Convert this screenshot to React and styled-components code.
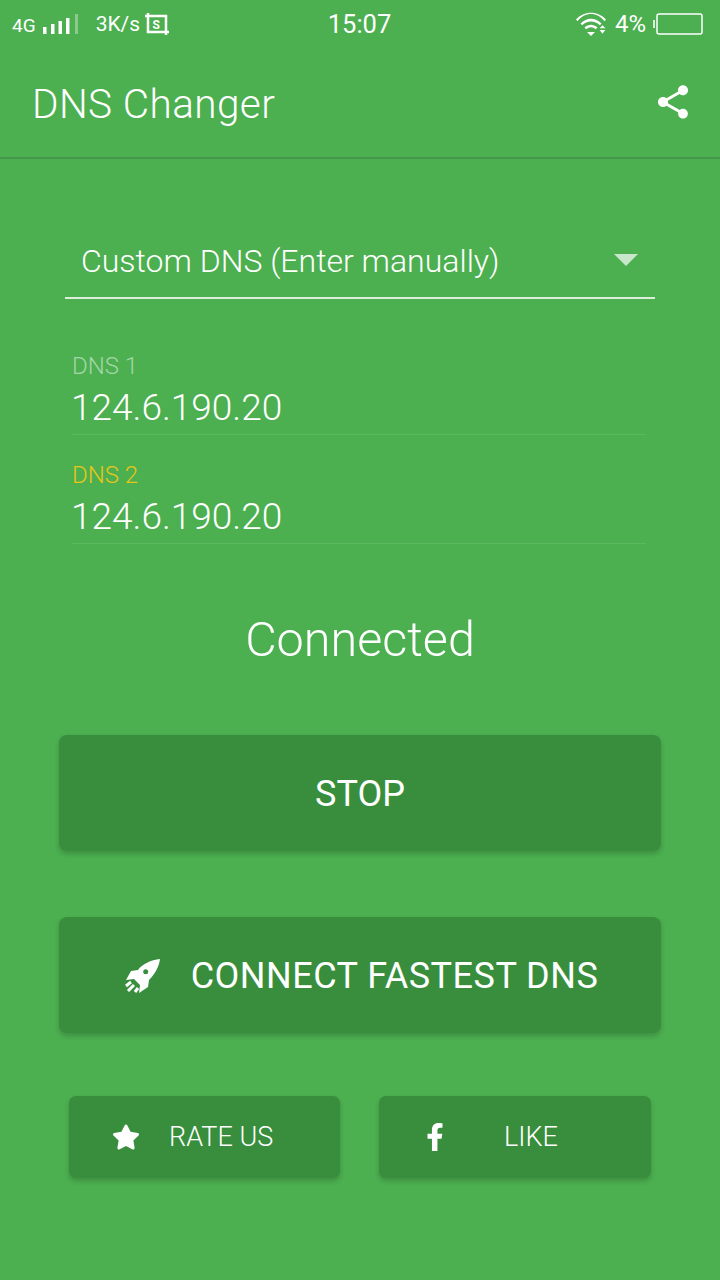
import React from "react";
import styled, { createGlobalStyle } from "styled-components";
import { FaStar, FaFacebookF } from "react-icons/fa";
import { MdShare } from "react-icons/md";

const GlobalStyle = createGlobalStyle`
  html, body {
    margin: 0;
    padding: 0;
    background: #4caf50;
  }
  * {
    box-sizing: border-box;
  }
`;

const Screen = styled.div`
  width: 720px;
  height: 1280px;
  background: #4caf50;
  color: #fff;
  font-family: Roboto, "Liberation Sans", sans-serif;
  font-weight: 300;
  overflow: hidden;
`;

const StatusBar = styled.div`
  height: 48px;
  padding: 0 17px 0 12px;
  display: grid;
  grid-template-columns: 1fr auto 1fr;
  align-items: center;
  font-size: 22px;
  font-weight: 400;
`;

const StatusGroup = styled.div`
  display: flex;
  align-items: center;
  justify-content: ${(p) => (p.$end ? "flex-end" : "flex-start")};
`;

const NetType = styled.span`
  font-size: 19px;
  margin-top: 3px;
`;

const Speed = styled.span`
  font-size: 21px;
  margin-left: 17px;
`;

const Clock = styled.span`
  margin-left: 4px;
  font-size: 25.5px;
  font-weight: 400;
`;

const Battery = styled.span`
  font-size: 24px;
  margin: 0 7px 0 7px;
`;

const Toolbar = styled.header`
  height: 111px;
  padding: 2px 32px 0;
  display: flex;
  align-items: center;
  justify-content: space-between;
  border-bottom: 2px solid #43984a;
`;

const Title = styled.h1`
  margin: 0;
  font-size: 40.5px;
  font-weight: 300;
  letter-spacing: 0.4px;
`;

const ShareButton = styled.span`
  display: flex;
  margin: -4px -5px 0 0;
  font-size: 40px;
`;

const Content = styled.main`
  padding: 64px 59px 0;
  display: flex;
  flex-direction: column;
`;

const Select = styled.div`
  margin: 0 6px;
  height: 76px;
  padding: 2px 17px 0 16px;
  display: flex;
  align-items: center;
  justify-content: space-between;
  border-bottom: 2px solid #dbefdc;
  font-size: 32px;
`;

const Caret = styled.span`
  width: 0;
  height: 0;
  margin-top: -3px;
  border-left: 12px solid transparent;
  border-right: 12px solid transparent;
  border-top: 12px solid #c8e6c9;
`;

const Fields = styled.div`
  margin: 49px 15px 0 13px;
  display: flex;
  flex-direction: column;
  gap: 22px;
`;

const Field = styled.div`
  height: 87px;
  border-bottom: 1px solid #5cb860;
`;

const FieldLabel = styled.div`
  height: 37px;
  font-size: 24px;
  line-height: 36px;
  color: ${(p) => p.$color};
`;

const FieldValue = styled.div`
  margin-left: -1px;
  font-size: 37px;
  line-height: 46px;
`;

const Status = styled.div`
  margin-top: 66px;
  text-align: center;
  font-size: 48.5px;
  line-height: 59px;
`;

const ActionButton = styled.div`
  height: 116px;
  margin-top: 66px;
  padding: 2px 0 0 ${(p) => (p.$wide ? 3 : 0)}px;
  border-radius: 8px;
  background: #388e3c;
  box-shadow: 0 3px 5px rgba(0, 0, 0, 0.18);
  display: flex;
  align-items: center;
  justify-content: center;
  gap: 30px;
  font-size: 36px;
  font-weight: 400;
  letter-spacing: ${(p) => (p.$wide ? 0.5 : 0)}px;
`;

const SmallRow = styled.div`
  margin: 63px 10px 0;
  display: grid;
  grid-template-columns: 271px 272px;
  justify-content: space-between;
`;

const SmallButton = styled.div`
  height: 82px;
  border-radius: 7px;
  background: #388e3c;
  box-shadow: 0 3px 5px rgba(0, 0, 0, 0.18);
  padding-left: ${(p) => p.$pad}px;
  display: flex;
  align-items: center;
  font-size: 27px;
`;

const SmallLabel = styled.span`
  margin-left: ${(p) => p.$gap}px;
`;

const Signal = () => (
  <svg width="36" height="24" viewBox="0 0 36 24" fill="#fff" style={{ marginLeft: 7 }}>
    <rect x="0" y="15" width="3.500" height="7" />
    <rect x="8" y="12" width="3.500" height="10" />
    <rect x="15.500" y="9" width="3.500" height="13" />
    <rect x="23" y="6" width="3.500" height="16" />
    <rect x="32" y="2" width="3" height="20" opacity="0.35" />
  </svg>
);

const Screenshot = () => (
  <svg width="28" height="24" viewBox="0 0 28 24" fill="none" stroke="#fff" strokeWidth="2.500" style={{ marginLeft: 4 }}>
    <path d="M4 1v19h21M1 4h21v19" />
    <text x="8.500" y="16.500" fontSize="12" fontWeight="700" fill="#fff" stroke="none" fontFamily="Roboto">S</text>
  </svg>
);

const Wifi = () => (
  <svg width="32" height="24" viewBox="0 0 32 24" fill="#fff">
    <path d="M0 7.500C8-1.500 22-1.500 30 7.500l-1.600 1.700C21-.3 9-.3 1.600 9.200z" />
    <path d="M4.500 11.500c6-6.500 15-6.500 21 0l-1.700 1.700c-5-5-12.600-5-17.600 0z" />
    <path d="M8.500 15.500c3.800-3.800 9.200-3.800 13 0l-1.700 1.700c-3-2.700-6.600-2.700-9.600 0z" />
    <path d="M11 20h8l-4 4z" />
    <path d="M27 17h6l-3-3zM27 19h6l-3 4z" transform="translate(-2 0) scale(0.95)" />
  </svg>
);

const BatteryIcon = () => (
  <svg width="50" height="22" viewBox="0 0 50 22" fill="none">
    <rect x="0" y="7" width="2" height="8" fill="#dbefdc" />
    <rect x="4" y="1" width="45" height="20" rx="2" stroke="#fff" strokeWidth="1.500" />
  </svg>
);

const Rocket = () => (
  <svg width="36" height="36" viewBox="0 0 36 36" fill="#fff">
    <path
      fillRule="evenodd"
      d="M35 1C26 2 17 6 13 12L6 13 1 22 9 21 15 27 14 35 23 29 24 22C30 16 34 9 35 1ZM20.700 11.200A2.500 2.500 0 1 0 20.700 16.200 2.500 2.500 0 1 0 20.700 11.200Z"
    />
    <path d="M6 24L1 28M9 27L3 33M13 30L10 34" stroke="#fff" strokeWidth="3" fill="none" />
  </svg>
);

const App = () => (
  <>
    <GlobalStyle />
    <Screen>
      <StatusBar>
        <StatusGroup>
          <NetType>4G</NetType>
          <Signal />
          <Speed>3K/s</Speed>
          <Screenshot />
        </StatusGroup>
        <Clock>15:07</Clock>
        <StatusGroup $end>
          <Wifi />
          <Battery>4%</Battery>
          <BatteryIcon />
        </StatusGroup>
      </StatusBar>
      <Toolbar>
        <Title>DNS Changer</Title>
        <ShareButton>
          <MdShare />
        </ShareButton>
      </Toolbar>
      <Content>
        <Select>
          <span>Custom DNS (Enter manually)</span>
          <Caret />
        </Select>
        <Fields>
          <Field>
            <FieldLabel $color="#a5d6a7">DNS 1</FieldLabel>
            <FieldValue>124.6.190.20</FieldValue>
          </Field>
          <Field>
            <FieldLabel $color="#e6c619">DNS 2</FieldLabel>
            <FieldValue>124.6.190.20</FieldValue>
          </Field>
        </Fields>
        <Status>Connected</Status>
        <ActionButton>STOP</ActionButton>
        <ActionButton $wide>
          <Rocket />
          CONNECT FASTEST DNS
        </ActionButton>
        <SmallRow>
          <SmallButton $pad={43}>
            <FaStar size={28} />
            <SmallLabel $gap={29}>RATE US</SmallLabel>
          </SmallButton>
          <SmallButton $pad={42}>
            <FaFacebookF size={28} />
            <SmallLabel $gap={55}>LIKE</SmallLabel>
          </SmallButton>
        </SmallRow>
      </Content>
    </Screen>
  </>
);

export default App;
